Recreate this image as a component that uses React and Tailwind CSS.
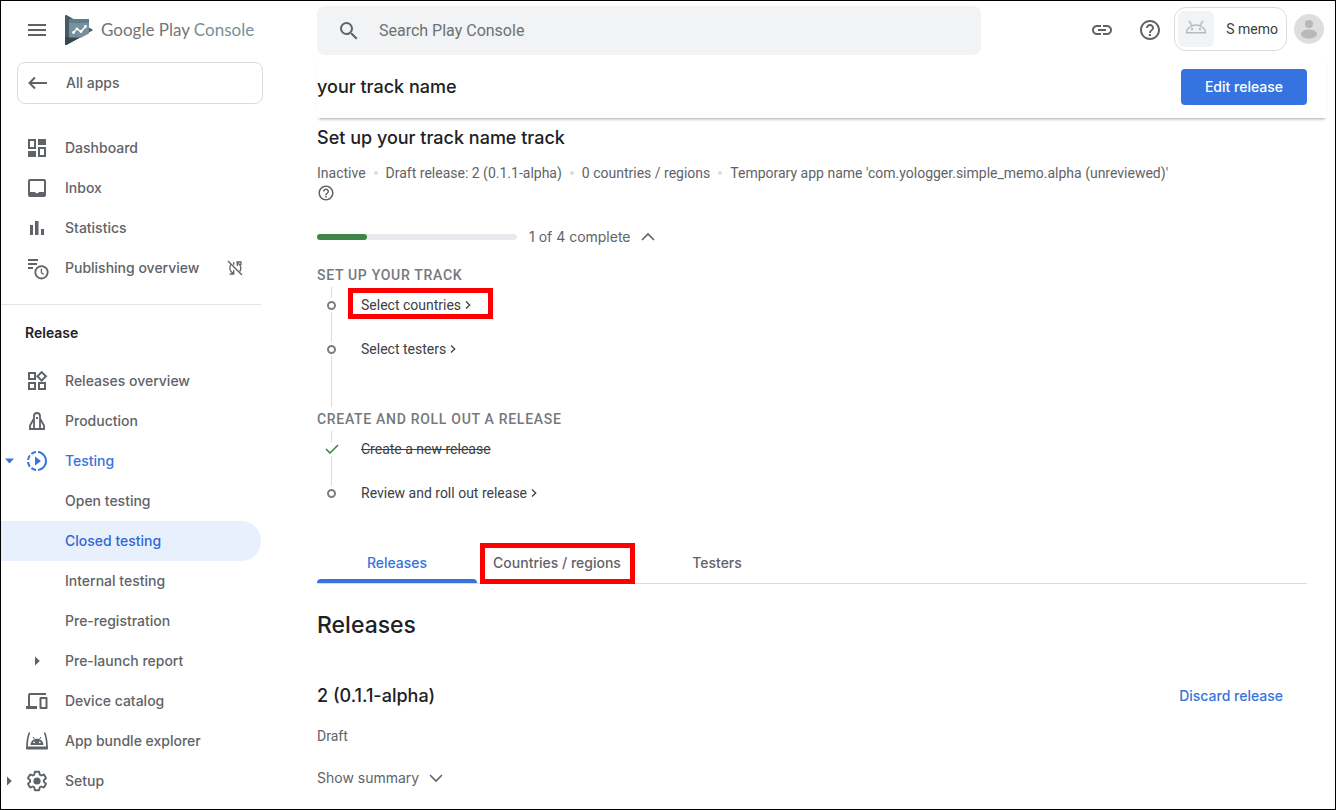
import React from "react";
import {
  MdHelpOutline,
  MdLink,
  MdOutlineWidgets,
  MdSearch,
  MdSlowMotionVideo,
} from "react-icons/md";

function Svg({ className = "size-6", children, ...rest }) {
  return (
    <svg viewBox="0 0 24 24" className={`shrink-0 ${className}`} fill="currentColor" aria-hidden="true" {...rest}>
      {children}
    </svg>
  );
}

const DashboardIcon = () => (
  <Svg>
    <path d="M13 3h8v6h-8zM3 15h8v6H3z" />
    <path d="M4 4h6v8H4zM14 12h6v8h-6z" fill="none" stroke="currentColor" strokeWidth="2" />
  </Svg>
);

const InboxIcon = () => (
  <Svg>
    <path
      fillRule="evenodd"
      d="M5 3h14a2 2 0 0 1 2 2v14a2 2 0 0 1-2 2H5a2 2 0 0 1-2-2V5c0-1.100.9-2 2-2zM5 5v11h5a2.200 2.200 0 0 0 4 0h5V5z"
    />
  </Svg>
);

const StatisticsIcon = () => (
  <Svg>
    <path d="M5 9h3v10H5zM10 5h3.500v14H10zM16 13h3v6h-3z" />
  </Svg>
);

const PublishingIcon = () => (
  <Svg overflow="visible">
    <path d="M3 3h10v2H3zM3 7h9v2H3zM3 11h5v2H3z" />
    <circle cx="16.500" cy="16.300" r="6.200" fill="none" stroke="currentColor" strokeWidth="1.800" />
    <path d="M16.400 12.800v3.900l2.400 1.800" fill="none" stroke="currentColor" strokeWidth="1.300" />
  </Svg>
);

const SyncOffIcon = () => (
  <Svg className="size-4" fill="none" stroke="currentColor" strokeWidth="2">
    <path d="M1.500 1.500l21 21" />
    <path d="M4 21h6v-5.500M9.500 20.500C3.500 17 3 10 6 6.500M10 3.500V7" />
    <path d="M14 3h7v5M15.500 9V3.500M17 5c4 3.500 4.500 8.500 2 12.500" />
  </Svg>
);

const ProductionIcon = () => (
  <Svg>
    <path
      d="M5 20v-3.500L9 9.500V7c0-4 6-4 6 0v2.500l4 7V20zM9 9.500V20M15 9.500V20"
      fill="none"
      stroke="currentColor"
      strokeWidth="1.800"
    />
    <path d="M11 8h2v2h-2z" />
  </Svg>
);

const DeviceIcon = () => (
  <Svg>
    <path d="M3 6a2 2 0 0 1 2-2h16v2H5v11h7v3H1v-3h2z" />
    <path d="M15.500 9h6v10h-6z" fill="none" stroke="currentColor" strokeWidth="2" strokeLinejoin="round" />
  </Svg>
);

const BundleIcon = () => (
  <Svg>
    <path d="M4.500 3.500C2.500 8 2 12 2 19h20c0-7-.5-11-2.500-15.500" fill="none" stroke="currentColor" strokeWidth="1.700" />
    <path d="M1.200 17.500h21.600v3H1.200z" />
    <path d="M8 8l1.700 2.400M16 8l-1.700 2.400" fill="none" stroke="currentColor" strokeWidth="1" />
    <path
      fillRule="evenodd"
      d="M5.500 16c.3-8.300 12.700-8.300 13 0zM9.200 12.400a.9.9 0 1 0 0 1.800.9.9 0 0 0 0-1.800zM14.800 12.400a.9.9 0 1 0 0 1.800.9.9 0 0 0 0-1.800z"
    />
  </Svg>
);

const SetupIcon = () => (
  <Svg>
    <path
      transform="translate(.9 .9) scale(.925)"
      fill="none"
      stroke="currentColor"
      strokeWidth="2"
      d="M19.430 12.980c.04-.32.07-.64.07-.98s-.03-.66-.07-.98l2.110-1.650c.19-.15.24-.42.12-.64l-2-3.460c-.09-.16-.26-.25-.44-.25-.06 0-.12.01-.17.03l-2.490 1c-.52-.4-1.080-.73-1.690-.98l-.38-2.650C14.460 2.180 14.250 2 14 2h-4c-.25 0-.46.18-.49.42l-.38 2.650c-.61.25-1.170.59-1.690.98l-2.490-1c-.06-.02-.12-.03-.18-.03-.17 0-.34.09-.43.25l-2 3.460c-.13.22-.07.49.12.64l2.110 1.650c-.04.32-.07.65-.07.98s.03.66.07.98l-2.110 1.650c-.19.15-.24.42-.12.64l2 3.460c.09.16.26.25.44.25.06 0 .12-.01.17-.03l2.490-1c.52.4 1.080.73 1.690.98l.38 2.650c.03.24.24.42.49.42h4c.25 0 .46-.18.49-.42l.38-2.650c.61-.25 1.170-.59 1.690-.98l2.490 1c.06.02.12.03.18.03.17 0 .34-.09.43-.25l2-3.460c.12-.22.07-.49-.12-.64l-2.110-1.650z"
    />
    <circle cx="12" cy="12" r="3.600" />
  </Svg>
);

const BackIcon = () => (
  <Svg fill="none" stroke="currentColor" strokeWidth="2">
    <path d="M21 12H4.500M9 6.500L3.500 12 9 17.500" />
  </Svg>
);

const MenuIcon = () => (
  <Svg>
    <path d="M3 6h18v2H3zM3 11h18v2H3zM3 16h18v2H3z" />
  </Svg>
);

const CaretRight = () => (
  <svg viewBox="0 0 8 10" className="h-2.5 w-2" fill="currentColor" aria-hidden="true">
    <path d="M2 0.500L6.800 5 2 9.500z" />
  </svg>
);

const CaretDown = () => (
  <svg viewBox="0 0 10 10" className="size-2.5" fill="currentColor" aria-hidden="true">
    <path d="M0 2.500h9L4.500 7.500z" />
  </svg>
);

const StepChevron = () => (
  <svg viewBox="0 0 6 10" className="h-2.5 w-1.5 shrink-0" fill="none" stroke="currentColor" strokeWidth="1.300" aria-hidden="true">
    <path d="M1 1.500L4.700 5 1 8.500" />
  </svg>
);

const Chevron = ({ up }) => (
  <svg viewBox="0 0 14 10" className="h-2.5 w-3.5" fill="none" stroke="currentColor" strokeWidth="1.600" aria-hidden="true">
    <path d={up ? "M1 8l6-6 6 6" : "M1 2l6 6 6-6"} />
  </svg>
);

const PlayLogo = () => (
  <svg viewBox="0 0 28 30" className="h-[30px] w-7 shrink-0" aria-hidden="true">
    <path d="M0 1.200C0 .2.900-.2 1.800.3L27 14.200c.7.400.7 1.200 0 1.600L1.800 29.700C.9 30.200 0 29.800 0 28.800z" fill="#455a64" />
    <path d="M0 22l4 0 12 0L1.800 29.700C.9 30.200 0 29.800 0 28.800z" fill="#37474f" />
    <path d="M4 4h20v14.500l-7.500 4H4z" fill="#78909c" />
    <path d="M4 4h20v4H4z" fill="#607d8b" />
    <path d="M8.500 17.500l3.500-3.700 4 2.700 4.500-5" fill="none" stroke="#fff" strokeWidth="1.400" />
    <g fill="#fff">
      <circle cx="8.500" cy="17.500" r="1.400" />
      <circle cx="12" cy="13.800" r="1.400" />
      <circle cx="16" cy="16.500" r="1.400" />
      <circle cx="20.500" cy="11.500" r="1.400" />
    </g>
  </svg>
);

const AndroidOutline = () => (
  <svg viewBox="0 0 22 14" className="mb-1 h-3.5 w-[22px]" fill="none" stroke="#b9bcbf" strokeWidth="1.500" aria-hidden="true">
    <path d="M1.500 12.800C2.200 2.500 19.800 2.500 20.500 12.800zM4 .8l2.600 4.200M18 .8l-2.600 4.200" />
    <circle cx="7" cy="9" r=".6" fill="#b9bcbf" />
    <circle cx="15" cy="9" r=".6" fill="#b9bcbf" />
  </svg>
);

const Avatar = () => (
  <svg viewBox="0 0 30 30" className="size-[30px]" aria-hidden="true">
    <circle cx="15" cy="15" r="15" fill="#dedede" />
    <circle cx="15" cy="10" r="4" fill="#b8b8b8" />
    <ellipse cx="15" cy="20" rx="8" ry="4.500" fill="#b8b8b8" />
  </svg>
);

const primaryNav = [
  { label: "Dashboard", icon: <DashboardIcon /> },
  { label: "Inbox", icon: <InboxIcon /> },
  { label: "Statistics", icon: <StatisticsIcon /> },
  { label: "Publishing overview", icon: <PublishingIcon />, trailing: <SyncOffIcon /> },
];

const releaseNav = [
  { label: "Releases overview", icon: <MdOutlineWidgets className="size-6" /> },
  { label: "Production", icon: <ProductionIcon /> },
  { label: "Testing", icon: <MdSlowMotionVideo className="size-6" />, caret: <CaretDown />, tone: "text-[#3574e0]" },
  { label: "Open testing" },
  { label: "Closed testing", tone: "bg-[#e8f0fe] text-[#3167d2]", current: true },
  { label: "Internal testing" },
  { label: "Pre-registration" },
  { label: "Pre-launch report", icon: <CaretRight /> },
  { label: "Device catalog", icon: <DeviceIcon /> },
  { label: "App bundle explorer", icon: <BundleIcon /> },
  { label: "Setup", icon: <SetupIcon />, caret: <CaretRight /> },
];

function NavList({ items }) {
  return (
    <ul>
      {items.map((item) => (
        <li key={item.label}>
          <a
            href="#"
            aria-current={item.current ? "page" : undefined}
            className={`mr-0.5 flex h-10 items-center rounded-r-full pr-[18px] ${item.tone || "text-[#5f6368]"}`}
          >
            <span className="flex w-6 pl-1">{item.caret}</span>
            <span className="mr-4 flex w-6 justify-center">{item.icon}</span>
            <span className="flex-1">{item.label}</span>
            {item.trailing}
          </a>
        </li>
      ))}
    </ul>
  );
}

function Sidebar() {
  return (
    <aside className="w-[262px] shrink-0 font-['Inter',sans-serif] text-sm font-medium text-[#5f6368]">
      <div className="flex h-[58px] items-center pl-6">
        <button type="button" aria-label="Main menu">
          <MenuIcon />
        </button>
        <a href="#" className="ml-4 flex items-center gap-2 font-['Lato',sans-serif] text-[17px] font-normal whitespace-nowrap">
          <PlayLogo />
          <span className="text-[#757575]">
            Google Play <span className="text-[#78909c]">Console</span>
          </span>
        </a>
      </div>
      <a href="#" className="mt-[3px] ml-4 flex h-[42px] items-center gap-4 rounded-lg border border-[#dadce0] pl-2">
        <BackIcon />
        All apps
      </a>
      <nav className="pt-6">
        <NavList items={primaryNav} />
        <hr className="mt-4 mr-0.5 border-[#e4e5e8]" />
        <h2 className="mt-[18px] mb-[18px] pl-6 leading-5 font-semibold text-[#202124]">Release</h2>
        <NavList items={releaseNav} />
      </nav>
    </aside>
  );
}

function TopBar() {
  return (
    <header className="flex items-center justify-between gap-10 pt-[5px] pr-[11px]">
      <div className="flex h-[49px] max-w-[664px] flex-1 items-center gap-[18px] rounded-lg bg-[#f1f3f4] pl-5 text-[#5f6368]">
        <MdSearch className="size-6" />
        <input
          type="search"
          aria-label="Search Play Console"
          placeholder="Search Play Console"
          className="min-w-0 flex-1 bg-transparent text-base outline-none placeholder:text-[#6d7175]"
        />
      </div>
      <div className="flex items-center text-[#5f6368]">
        <div className="mb-0.5 flex gap-6">
          <button type="button" aria-label="Copy link">
            <MdLink className="size-6" />
          </button>
          <button type="button" aria-label="Help">
            <MdHelpOutline className="size-6" />
          </button>
        </div>
        <div className="mb-1 ml-3 flex items-center gap-[7px]">
          <button
            type="button"
            className="flex h-11 items-center gap-3 rounded-xl border border-[#dadce0] pr-2 pl-[3px] text-sm text-[#3c4043]"
          >
            <span className="flex size-9 items-center justify-center rounded-md bg-[#f1f3f4]">
              <AndroidOutline />
            </span>
            S memo
          </button>
          <button type="button" aria-label="Account">
            <Avatar />
          </button>
        </div>
      </div>
    </header>
  );
}

function Step({ label, done, highlight, trail }) {
  return (
    <li className="flex items-start gap-[15px]">
      <span className="flex w-[29px] flex-col items-center">
        <span className="flex h-3.5 items-center">
          {done ? (
            <svg viewBox="0 0 14 10" className="h-2.5 w-3.5" fill="none" stroke="#3c8745" strokeWidth="1.600" aria-hidden="true">
              <path d="M1 5l4 4 8-8" />
            </svg>
          ) : (
            <span className="size-[9px] rounded-full border-2 border-[#7b7f83]" />
          )}
        </span>
        {trail && <span className={`w-px bg-[#dadce0] ${trail}`} />}
      </span>
      <a href="#" className={`relative flex items-center gap-1 leading-3.5 text-[#3c4043] ${done ? "line-through" : ""}`}>
        {label}
        {!done && <StepChevron />}
        {highlight && <span className="absolute -top-2.5 -right-[22px] -bottom-[7px] -left-[13px] border-5 border-[#ff0000]" />}
      </a>
    </li>
  );
}

function StepGroup({ title, children }) {
  return (
    <section>
      <h3 className="leading-5 font-medium tracking-wider text-[#75797d] uppercase">{title}</h3>
      <ol className="mt-0.5 mb-0.5 before:ml-3.5 before:block before:h-[11px] before:w-px before:bg-[#dadce0]">{children}</ol>
    </section>
  );
}

const facts = ["Inactive", "Draft release: 2 (0.1.1-alpha)", "0 countries / regions"];

function TrackSetup() {
  return (
    <section className="pr-7">
      <h2 className="mt-2 font-['Inter',sans-serif] text-lg leading-6 font-medium text-[#202124]">
        Set up your track name track
      </h2>
      <ul className="mt-[13px] flex flex-wrap leading-5 text-[#5f6368]">
        {facts.map((fact) => (
          <li key={fact} className="flex items-center after:mx-2 after:size-1 after:rounded-full after:bg-[#dadce0]">
            {fact}
          </li>
        ))}
        <li>
          Temporary app name 'com.yologger.simple_memo.alpha (unreviewed)'
        </li>
      </ul>
      <button type="button" aria-label="About the temporary app name" className="flex h-5 items-center text-[#5f6368]">
        <MdHelpOutline className="size-[18px]" />
      </button>
      <div className="mt-6 flex items-center gap-3 text-[#5f6368]">
        <div role="progressbar" aria-label="Track setup" aria-valuenow={1} aria-valuemax={4} className="h-1.5 w-[200px] rounded-full bg-[#e8eaed]">
          <div className="h-full w-1/4 rounded-full bg-[#3c8745]" />
        </div>
        <button type="button" className="flex items-center gap-2.5 font-['Inter',sans-serif] leading-5">
          1 of 4 complete
          <Chevron up />
        </button>
      </div>
      <div className="mt-[18px]">
        <StepGroup title="Set up your track">
          <Step label="Select countries" highlight trail="h-[30px]" />
          <Step label="Select testers" trail="h-[51px]" />
        </StepGroup>
        <StepGroup title="Create and roll out a release">
          <Step label="Create a new release" done trail="h-[30px]" />
          <Step label="Review and roll out release" />
        </StepGroup>
      </div>
    </section>
  );
}

function Tabs() {
  const tab = "relative h-10 w-40";
  return (
    <div role="tablist" className="mt-[43px] mr-7 flex border-b border-[#dadce0] font-['Inter',sans-serif] font-medium text-[#5f6368]">
      <button type="button" role="tab" aria-selected="true" className={`${tab} text-[#3574e0]`}>
        Releases
        <span className="absolute inset-x-0 bottom-0 h-1 rounded-t bg-[#3574e0]" />
      </button>
      <button type="button" role="tab" aria-selected="false" className={tab}>
        Countries / regions
        <span className="absolute top-0 right-0.5 -bottom-px left-[3px] border-5 border-[#ff0000]" />
      </button>
      <button type="button" role="tab" aria-selected="false" className={tab}>
        Testers
      </button>
    </div>
  );
}

export default function App() {
  return (
    <div className="flex min-h-screen border border-black bg-white font-['Roboto',sans-serif] text-sm">
      <Sidebar />
      <div className="ml-[54px] min-w-0 flex-1">
        <TopBar />
        <div className="mr-2 flex h-[63px] items-center justify-between pr-5 shadow-[0_3px_3px_-2px_rgba(0,0,0,0.35)]">
          <h1 className="font-['Inter',sans-serif] text-lg font-medium text-[#202124]">your track name</h1>
          <button type="button" className="h-9 rounded bg-[#3574e0] px-6 font-['Inter',sans-serif] font-medium text-white">
            Edit release
          </button>
        </div>
        <main>
          <TrackSetup />
          <Tabs />
          <section className="pr-[52px] pb-4">
            <h2 className="mt-[25px] font-['Inter',sans-serif] text-[23px] leading-8 font-medium text-[#202124]">Releases</h2>
            <div className="mt-[43px] flex items-center justify-between font-['Inter',sans-serif] font-medium">
              <h3 className="text-lg leading-6 text-[#202124]">2 (0.1.1-alpha)</h3>
              <button type="button" className="text-[#3574e0]">
                Discard release
              </button>
            </div>
            <p className="mt-[18px] leading-5 text-[#5f6368]">Draft</p>
            <button type="button" className="mt-[22px] flex items-center gap-2.5 font-['Inter',sans-serif] leading-5 text-[#5f6368]">
              Show summary
              <Chevron />
            </button>
          </section>
        </main>
      </div>
    </div>
  );
}
